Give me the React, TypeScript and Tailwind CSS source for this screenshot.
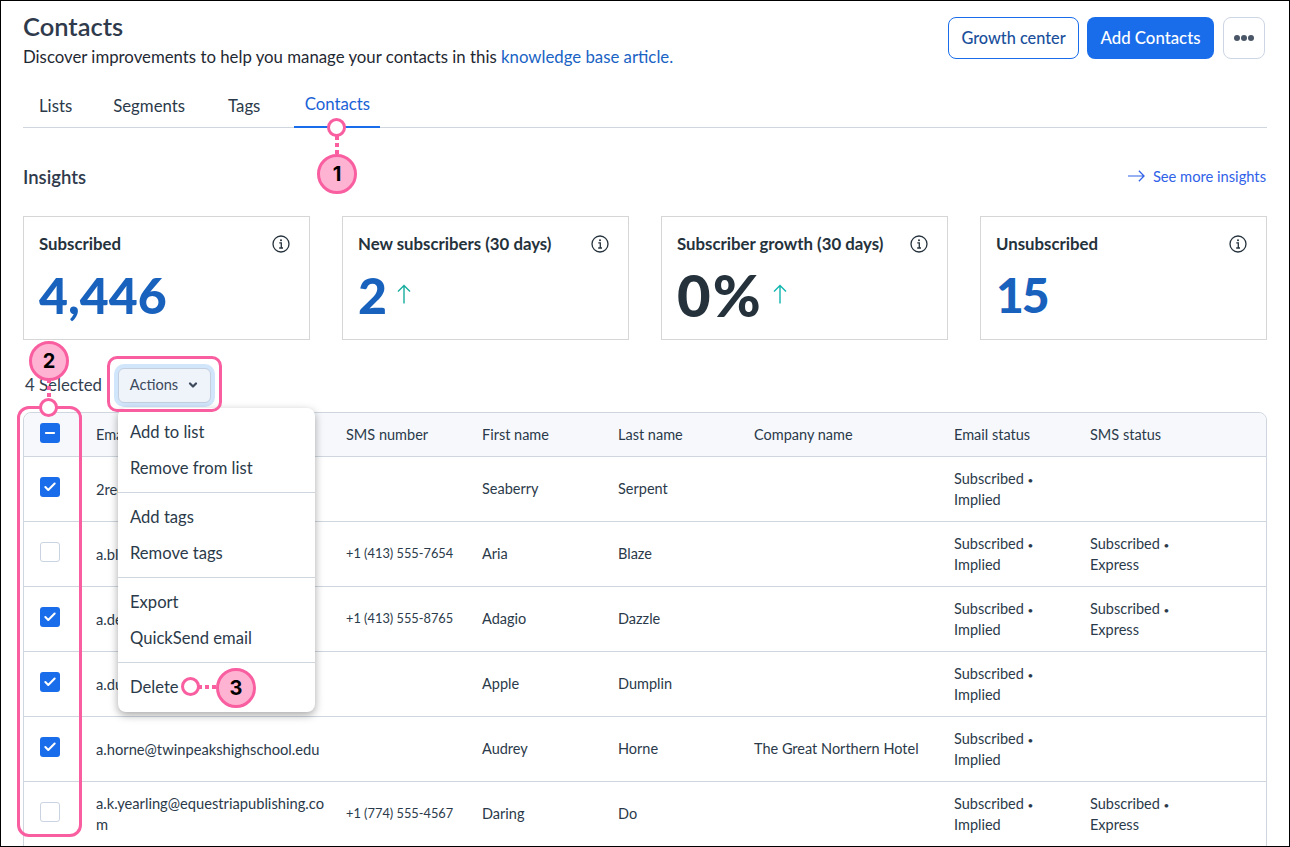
import { ChevronDown, Check, Minus } from "lucide-react";

const font = "font-['Lato','Open_Sans',sans-serif]";

const stats = [
  { label: "Subscribed", value: "4,446", color: "text-[#1862bd] text-[50px]" },
  { label: "New subscribers (30 days)", value: "2", color: "text-[#1862bd] text-[50px]", arrow: "ml-[10px] text-[#17ad9e]" },
  { label: "Subscriber growth (30 days)", value: "0%", color: "text-[#25323c] text-[58px] tracking-[2px]", arrow: "ml-[10px] text-[#0fb5ae]" },
  { label: "Unsubscribed", value: "15", color: "text-[#1862bd] text-[48px] tracking-[-2px]" },
];

const rows = [
  { checked: true, email: "2red", sms: "", first: "Seaberry", last: "Serpent", company: "", smsStatus: false },
  { checked: false, email: "a.bl", sms: "+1 (413) 555-7654", first: "Aria", last: "Blaze", company: "", smsStatus: true },
  { checked: true, email: "a.de", sms: "+1 (413) 555-8765", first: "Adagio", last: "Dazzle", company: "", smsStatus: true },
  { checked: true, email: "a.du", sms: "", first: "Apple", last: "Dumplin", company: "", smsStatus: false },
  { checked: true, email: "a.horne@twinpeakshighschool.edu", sms: "", first: "Audrey", last: "Horne", company: "The Great Northern Hotel", smsStatus: false },
  { checked: false, email: "a.k.yearling@equestriapublishing.com", sms: "+1 (774) 555-4567", first: "Daring", last: "Do", company: "", smsStatus: true },
];

const rowGrid = "grid grid-cols-[60px_262px_136px_136px_136px_200px_136px_1fr] items-center";

function Box({ checked }: { checked: boolean }) {
  if (!checked) return <div className="w-5 h-5 rounded-[3px] border border-[#c9d3e2] bg-white" />;
  return (
    <div className="w-5 h-5 rounded-[3px] bg-[#1a6dea] flex items-center justify-center">
      <Check className="w-[14px] h-[14px] text-white" strokeWidth={3.5} />
    </div>
  );
}

function InfoIcon() {
  return (
    <svg viewBox="0 0 18 18" className="w-[18px] h-[18px] text-[#25323c]" fill="none" stroke="currentColor">
      <circle cx="9" cy="9" r="8" strokeWidth="1.3" />
      <circle cx="9" cy="5.2" r="1" fill="currentColor" stroke="none" />
      <path d="M7.3 7.9H9.3V12.9M7.2 13H11" strokeWidth="1.3" />
    </svg>
  );
}

function UpArrow({ className }: { className: string }) {
  return (
    <svg viewBox="0 0 14 20" className={`w-[14px] h-5 ${className}`} fill="none" stroke="currentColor" strokeWidth="1.4">
      <path d="M7 19.5V1.5M1 7.5L7 1.5L13 7.5" />
    </svg>
  );
}

function Badge({ n, className }: { n: number; className: string }) {
  return (
    <div className={`absolute w-10 h-10 rounded-full border-[3px] border-[#f85ea0] bg-[#ffb3d2] flex items-center justify-center text-[20px] font-bold text-black font-['Inter',sans-serif] ${className}`}>
      {n}
    </div>
  );
}

function Dot({ className }: { className: string }) {
  return <div className={`absolute w-[19px] h-[19px] rounded-full border-[3px] border-[#f85ea0] bg-white ${className}`} />;
}

function DotLine({ vertical, className }: { vertical?: boolean; className: string }) {
  return (
    <div className={`absolute flex gap-[3px] ${vertical ? "flex-col" : ""} ${className}`}>
      <span className="w-1 h-1 bg-[#f85ea0]" />
      <span className="w-1 h-1 bg-[#f85ea0]" />
      <span className="w-1 h-1 bg-[#f85ea0]" />
    </div>
  );
}

function MenuItem({ children }: { children: string }) {
  return <div className="h-9 flex items-center px-3 pt-[1px] text-[16.6px] text-[#2b3a4a]">{children}</div>;
}

export default function App() {
  return (
    <div className={`relative w-[1290px] h-[847px] overflow-hidden border border-black bg-white ${font}`}>
      <div className="px-[22px]">
        <div className="flex justify-between pt-4">
          <div>
            <h1 className="text-[25.5px] leading-[20px] -mt-[1px] font-semibold text-[#2f3b4c]">Contacts</h1>
            <p className="text-[16.8px] leading-5 mt-[11px] text-[#1f2933]">
              Discover improvements to help you manage your contacts in this <span className="text-[#1863c4]">knowledge base article.</span>
            </p>
          </div>
          <div className="flex gap-2 mr-[2px]">
            <button className="w-[131px] h-[42px] rounded-lg border border-[#1a6dea] text-[16.3px] font-medium text-[#1a4f9c]">Growth center</button>
            <button className="w-[127px] h-[42px] rounded-lg bg-[#1a6dea] text-[16.8px] font-medium text-white">Add Contacts</button>
            <button className="w-[42px] h-[42px] ml-[1px] rounded-lg border border-[#cdd6e4] flex items-center justify-center gap-[1px]">
              <span className="w-[6px] h-[6px] rounded-full bg-[#4a5668]" />
              <span className="w-[6px] h-[6px] rounded-full bg-[#4a5668]" />
              <span className="w-[6px] h-[6px] rounded-full bg-[#4a5668]" />
            </button>
          </div>
        </div>

        <div className="flex gap-[10px] h-[43px] mt-[18px] border-b border-[#cfd6de] text-[16.8px] text-[#2b3a4a]">
          <div className="px-4 pt-2">Lists</div>
          <div className="px-4 pt-2 -ml-[1px]">Segments</div>
          <div className="px-4 pt-2 ml-[1px]">Tags</div>
          <div className="ml-2 w-[86px] h-[43px] text-center pt-[6px] text-[#1a62d6] border-b-2 border-[#1a6dea]">Contacts</div>
        </div>

        <div className="flex justify-between items-center mt-[38px] h-6 pr-[1px]">
          <div className="text-[18.5px] font-semibold text-[#2f3b4c]">Insights</div>
          <div className="flex items-center gap-[8px] pb-[4px] text-[14.7px] text-[#2f62e8]">
            <svg viewBox="0 0 18 12" className="w-[17px] h-3" fill="none" stroke="currentColor" strokeWidth="1.3">
              <path d="M0 6H17M11.5 0.5L17 6L11.5 11.5" />
            </svg>
            See more insights
          </div>
        </div>

        <div className="grid grid-cols-4 gap-8 mt-[26px]">
          {stats.map((s) => (
            <div key={s.label} className="h-[124px] border border-[#d6d6d6] px-[15px] pt-[15px]">
              <div className="flex justify-between items-center h-6 pr-1">
                <span className="text-[16.8px] font-bold text-[#25323c]">{s.label}</span>
                <InfoIcon />
              </div>
              <div className="flex items-center mt-[14px] h-[50px]">
                <span className={`leading-[50px] font-black ${s.color}`}>{s.value}</span>
                {s.arrow && <UpArrow className={`mb-[2px] ${s.arrow}`} />}
              </div>
            </div>
          ))}
        </div>

        <div className="flex items-center mt-[20px] h-[50px]">
          <span className="ml-[2px] text-[16.8px] text-[#33404f]">4 Selected</span>
          <div className="ml-[16px] w-[93px] h-[35px] rounded-md border border-[#c3cede] bg-[#eff3fa] ring-[4px] ring-[#d1e5fb] flex items-center justify-center gap-[9px] text-[14.6px] text-[#3c4a5c]">
            Actions <ChevronDown className="w-3 h-3" strokeWidth={4.5} />
          </div>
        </div>

        <div className="mt-[2px] rounded-t-lg border border-[#cfd6de] text-[14.5px] text-[#2b3a4a]">
          <div className={`${rowGrid} h-[43px] rounded-t-lg bg-[#f6f8fc]`}>
            <div className="pl-4 mb-1">
              <div className="w-5 h-5 rounded-[3px] bg-[#1a6dea] flex items-center justify-center">
                <Minus className="w-[14px] h-[14px] text-white" strokeWidth={3.5} />
              </div>
            </div>
            <div className="pl-3">Email</div>
            <div>SMS number</div>
            <div>First name</div>
            <div>Last name</div>
            <div>Company name</div>
            <div>Email status</div>
            <div>SMS status</div>
          </div>
          {rows.map((r) => (
            <div key={r.email} className={`${rowGrid} h-[65px] border-t border-[#cfd6de]`}>
              <div className="pl-4 mb-[4px]">
                <Box checked={r.checked} />
              </div>
              <div className="pl-3 pr-[14px] text-[14.7px] leading-[21px] break-all">{r.email}</div>
              <div className="text-[12.8px]">{r.sms}</div>
              <div>{r.first}</div>
              <div>{r.last}</div>
              <div>{r.company}</div>
              <div className="leading-[21px]">Subscribed <span className="text-[10px] leading-none">•</span><br />Implied</div>
              <div className="leading-[21px]">
                {r.smsStatus && (
                  <>
                    Subscribed <span className="text-[10px] leading-none">•</span><br />Express
                  </>
                )}
              </div>
            </div>
          ))}
        </div>
      </div>

      {/* Actions menu */}
      <div className="absolute left-[117px] top-[407px] w-[197px] h-[304px] bg-white rounded-lg shadow-[0_3px_8px_rgba(0,0,0,0.35)] flex flex-col py-[6px]">
        <MenuItem>Add to list</MenuItem>
        <MenuItem>Remove from list</MenuItem>
        <div className="border-t border-[#cfd6de] my-[6px]" />
        <MenuItem>Add tags</MenuItem>
        <MenuItem>Remove tags</MenuItem>
        <div className="border-t border-[#cfd6de] my-[6px]" />
        <MenuItem>Export</MenuItem>
        <MenuItem>QuickSend email</MenuItem>
        <div className="border-t border-[#cfd6de] my-[6px]" />
        <MenuItem>Delete</MenuItem>
      </div>

      {/* Callouts */}
      <div className="absolute left-[106px] top-[355px] w-[115px] h-[56px] rounded-[10px] border-[3px] border-[#f85ea0]" />
      <div className="absolute left-[16px] top-[405px] w-[65px] h-[431px] rounded-[12px] border-[3px] border-[#f85ea0]" />

      <DotLine vertical className="left-[334px] top-[135px]" />
      <Dot className="left-[326px] top-[117px]" />
      <Badge n={1} className="left-[316px] top-[153px]" />

      <DotLine vertical className="left-[46px] top-[378px]" />
      <Dot className="left-[38px] top-[397px]" />
      <Badge n={2} className="left-[28px] top-[340px]" />

      <DotLine className="left-[197px] top-[684px]" />
      <Dot className="left-[180px] top-[676px]" />
      <Badge n={3} className="left-[215px] top-[667px]" />
    </div>
  );
}
